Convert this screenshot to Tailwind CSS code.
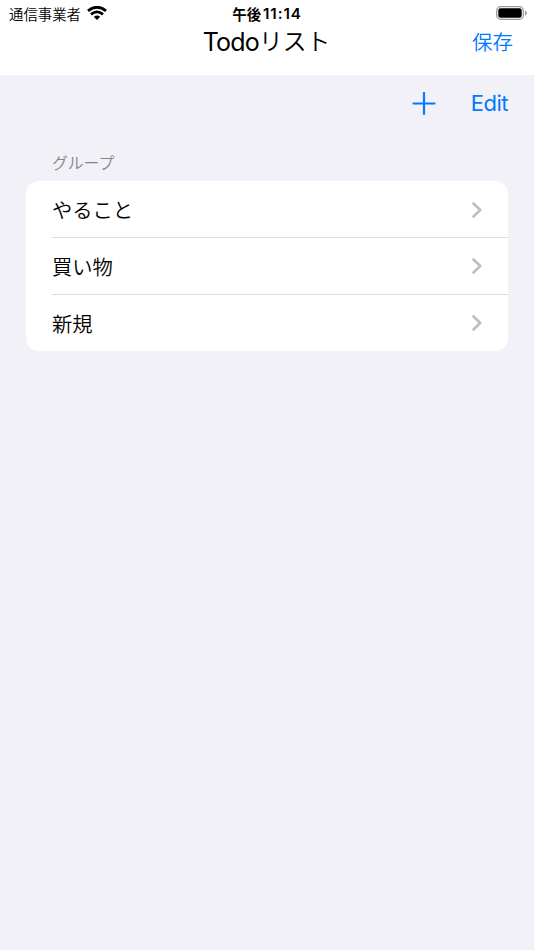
<!DOCTYPE html>
<html lang="ja">
<head>
<meta charset="utf-8">
<title>Todoリスト</title>
<script src="https://cdn.jsdelivr.net/npm/@tailwindcss/browser@4"></script>
</head>
<body class="bg-[#f2f1f7] font-['Inter','Noto_Sans_CJK_JP',sans-serif] text-black">
<div class="flex h-[950px] w-[534px] flex-col overflow-hidden">
  <header class="h-[75px] bg-white">
    <div class="grid h-[27px] grid-cols-[1fr_auto_1fr] items-center pr-[7px] pl-[9px]">
      <div class="flex items-center gap-[6px] text-[14.4px] leading-[27px] font-[350]"><span class="pt-px">通信事業者</span>
        <svg class="-mt-[2px] h-[14px] w-[20px]" viewBox="0 0 20 14"><g fill="none" stroke="#000" stroke-width="2.8"><path d="M1 4.9Q10-2.5 19 4.9"/><path d="M4 8.3Q10 3.4 16 8.3"/></g><path d="M6.8 10.8Q10 8.2 13.2 10.8L10 14Z"/></svg>
      </div>
      <div class="mr-[2px] flex gap-[2px] text-[15.2px] leading-[27px] font-semibold"><span class="text-[14.4px] font-bold">午後</span><span class="-mt-px tracking-[0.9px]">11:14</span></div>
      <svg class="-mt-[2px] h-[14px] w-[31px] justify-self-end" viewBox="0 0 31 14"><rect x=".7" y=".7" width="26.6" height="12.6" rx="4" fill="none" stroke="#999" stroke-width="1.3"/><rect x="2.3" y="2.3" width="23.4" height="9.4" rx="2.2"/><path d="M29 4.5Q31 5.5 31 7T29 9.5Z" fill="#999"/></svg>
    </div>
    <div class="grid h-[30px] grid-cols-[1fr_auto_1fr] items-center pr-[21px] pl-[20px]">
      <div></div>
      <h1 class="flex text-[25px] leading-[30px]"><span class="tracking-[-0.8px]">Todo</span><span class="text-[23.8px] font-[350]">リスト</span></h1>
      <button class="justify-self-end pt-[1px] text-[20.5px] leading-[28px] font-[350] text-[#007aff]">保存</button>
    </div>
  </header>
  <nav class="flex h-[57px] items-center justify-end gap-[34.5px] pr-[26px] text-[#007aff]">
    <svg class="size-[24px]" viewBox="0 0 24 24" fill="none" stroke="currentColor" stroke-width="2.2" stroke-linecap="round"><path d="M12 1v21M1.5 11.5h21"/></svg>
    <button class="-mt-px text-[22px] leading-[30px] tracking-[-0.5px]">Edit</button>
  </nav>
  <main class="px-[26px] pt-[20px]">
    <h2 class="h-[29.4px] pl-[26px] text-[15.8px] leading-[24px] font-[350] text-[#838388]">グループ</h2>
    <ul class="rounded-[13px] bg-white pl-[26px] text-[20.3px] font-[350]">
      <li class="flex h-[56.6px] items-center justify-between border-b border-[#dededf] pr-[26px]"><span class="pt-[4px]">やること</span><svg class="mt-px h-[16px] w-[10px]" viewBox="0 0 10 16" fill="none" stroke="#bfbfbf" stroke-width="2.6" stroke-linecap="round" stroke-linejoin="round"><path d="M1.5 1.5 8.2 8l-6.7 6.5"/></svg></li>
      <li class="flex h-[57px] items-center justify-between border-b border-[#dededf] pr-[26px]"><span class="pt-[4px]">買い物</span><svg class="mt-px h-[16px] w-[10px]" viewBox="0 0 10 16" fill="none" stroke="#bfbfbf" stroke-width="2.6" stroke-linecap="round" stroke-linejoin="round"><path d="M1.5 1.5 8.2 8l-6.7 6.5"/></svg></li>
      <li class="flex h-[56.4px] items-center justify-between pr-[26px]"><span class="pt-[4px]">新規</span><svg class="h-[16px] w-[10px]" viewBox="0 0 10 16" fill="none" stroke="#bfbfbf" stroke-width="2.6" stroke-linecap="round" stroke-linejoin="round"><path d="M1.5 1.5 8.2 8l-6.7 6.5"/></svg></li>
    </ul>
  </main>
</div>
</body>
</html>
